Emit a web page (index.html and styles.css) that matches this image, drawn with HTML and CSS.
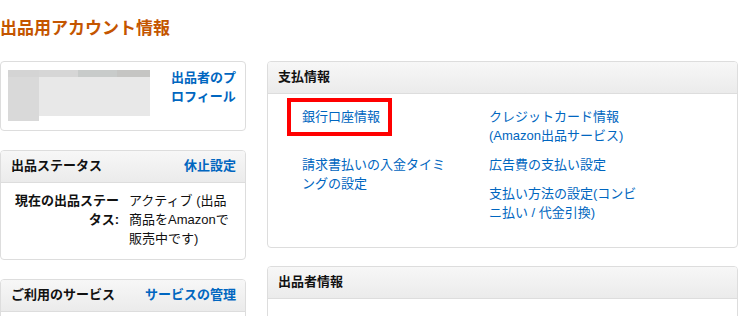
FILE: index.html
```html
<!DOCTYPE html>
<html lang="ja">
<head>
<meta charset="utf-8">
<title>出品用アカウント情報</title>
<link rel="stylesheet" href="styles.css">
</head>
<body>
<div class="page">
  <h1 class="page-title">出品用アカウント情報</h1>
  <div class="layout">
    <div class="col-left">
      <section class="card profile-card">
        <div class="profile-image" aria-hidden="true">
          <div class="pi-strip">
            <span class="pi-s1"></span><span class="pi-s2"></span><span class="pi-s3"></span><span class="pi-s4"></span>
          </div>
          <div class="pi-body">
            <span class="pi-side"></span><span class="pi-main"></span>
          </div>
        </div>
        <a class="link bold profile-link" href="#">出品者のプロフィール</a>
      </section>

      <section class="card">
        <header class="card-header">
          <span class="card-title">出品ステータス</span>
          <a class="link bold" href="#">休止設定</a>
        </header>
        <div class="card-body status-body">
          <div class="status-label">現在の出品ステータス:</div>
          <div class="status-value">アクティブ (出品商品をAmazonで販売中です)</div>
        </div>
      </section>

      <section class="card">
        <header class="card-header">
          <span class="card-title">ご利用のサービス</span>
          <a class="link bold" href="#">サービスの管理</a>
        </header>
        <div class="card-body services-body">
          <div class="service-row">大口出品</div>
        </div>
      </section>
    </div>

    <div class="col-right">
      <section class="card">
        <header class="card-header">
          <span class="card-title">支払情報</span>
        </header>
        <div class="card-body pay-grid">
          <div class="pay-item pay-a is-highlighted"><a class="link" href="#">銀行口座情報</a></div>
          <div class="pay-item pay-b"><a class="link" href="#">クレジットカード情報(Amazon出品サービス)</a></div>
          <div class="pay-item pay-c"><a class="link" href="#">請求書払いの入金タイミングの設定</a></div>
          <div class="pay-item pay-d"><a class="link" href="#">広告費の支払い設定</a></div>
          <div class="pay-item pay-e"><a class="link" href="#">支払い方法の設定(コンビニ払い / 代金引換)</a></div>
        </div>
      </section>

      <section class="card">
        <header class="card-header">
          <span class="card-title">出品者情報</span>
        </header>
        <div class="card-body pay-grid seller-grid">
          <div class="pay-item"><a class="link" href="#">正式名称/住所</a></div>
          <div class="pay-item"><a class="link" href="#">営業所の住所</a></div>
        </div>
      </section>
    </div>
  </div>
</div>
</body>
</html>
```

FILE: styles.css
```css
html {
  overflow: hidden;
}
body {
  margin: 0;
  font-family: "Liberation Sans", "Noto Sans CJK JP", sans-serif;
  font-size: 13px;
  line-height: 19px;
  color: #111;
  background: #fff;
}
.page {
  padding: 0 8px 0 0;
}
.page-title {
  margin: 0;
  padding-top: 15px;
  font-size: 17px;
  line-height: 24px;
  font-weight: bold;
  color: #c45500;
  font-family: "Noto Sans CJK JP", sans-serif;
}
.layout {
  display: flex;
  gap: 21px;
  margin-top: 22px;
  align-items: flex-start;
}
.col-left {
  width: 246px;
  flex: none;
  display: flex;
  flex-direction: column;
  gap: 19px;
}
.col-right {
  flex: 1;
  min-width: 0;
  display: flex;
  flex-direction: column;
  gap: 18px;
}
.card {
  border: 1px solid #ddd;
  border-radius: 4px;
  background: #fff;
  overflow: hidden;
}
.card-header {
  display: flex;
  justify-content: space-between;
  align-items: center;
  padding: 5px 9px 7px 10px;
  background: linear-gradient(#f7f7f7, #ebebeb);
  border-bottom: 1px solid #ddd;
}
.card-title {
  font-weight: bold;
  color: #111;
}
.link {
  color: #0066c0;
  text-decoration: none;
}
.bold {
  font-weight: bold;
}

/* profile card */
.profile-card {
  display: flex;
  align-items: flex-start;
  gap: 21px;
  padding: 8px 7px 9px 7px;
}
.profile-image {
  width: 142px;
  height: 51px;
  flex: none;
  display: flex;
  flex-direction: column;
}
.pi-strip {
  display: flex;
  height: 7px;
}
.pi-s1 { width: 31px; background: #d4d4d4; }
.pi-s2 { width: 39px; background: #d6d6d6; }
.pi-s3 { width: 39px; background: #c8cbca; }
.pi-s4 { width: 33px; background: #c5c5c3; }
.pi-body {
  display: flex;
  flex: 1;
  align-items: flex-start;
}
.pi-side {
  width: 31px;
  height: 44px;
  background: #d9d9d9;
}
.pi-main {
  flex: 1;
  height: 39px;
  background: #e8e8e8;
}
.profile-link {
  width: 68px;
  margin-top: -2px;
}

/* status card */
.status-body {
  display: flex;
  gap: 10px;
  padding: 8px 7px 11px 10px;
}
.status-label {
  width: 108px;
  flex: none;
  text-align: right;
  font-weight: bold;
}
.status-value {
  width: 110px;
}
.services-body {
  padding: 14px 10px 10px;
}

/* payment card */
.pay-grid {
  display: grid;
  grid-template-columns: 150px 150px;
  column-gap: 37px;
  row-gap: 10px;
  align-items: start;
  padding: 13px 10px 25px 34px;
}
.pay-item {
  position: relative;
}
.pay-c {
  grid-column: 1;
  grid-row: 2 / span 2;
}
.pay-d {
  grid-column: 2;
  grid-row: 2;
}
.pay-e {
  grid-column: 2;
  grid-row: 3;
}
.is-highlighted::after {
  content: "";
  position: absolute;
  left: -15px;
  top: -9px;
  width: 105px;
  height: 38px;
  border: 4px solid #ff0000;
  box-sizing: border-box;
  pointer-events: none;
}
.seller-grid {
  padding-top: 14px;
}
```
